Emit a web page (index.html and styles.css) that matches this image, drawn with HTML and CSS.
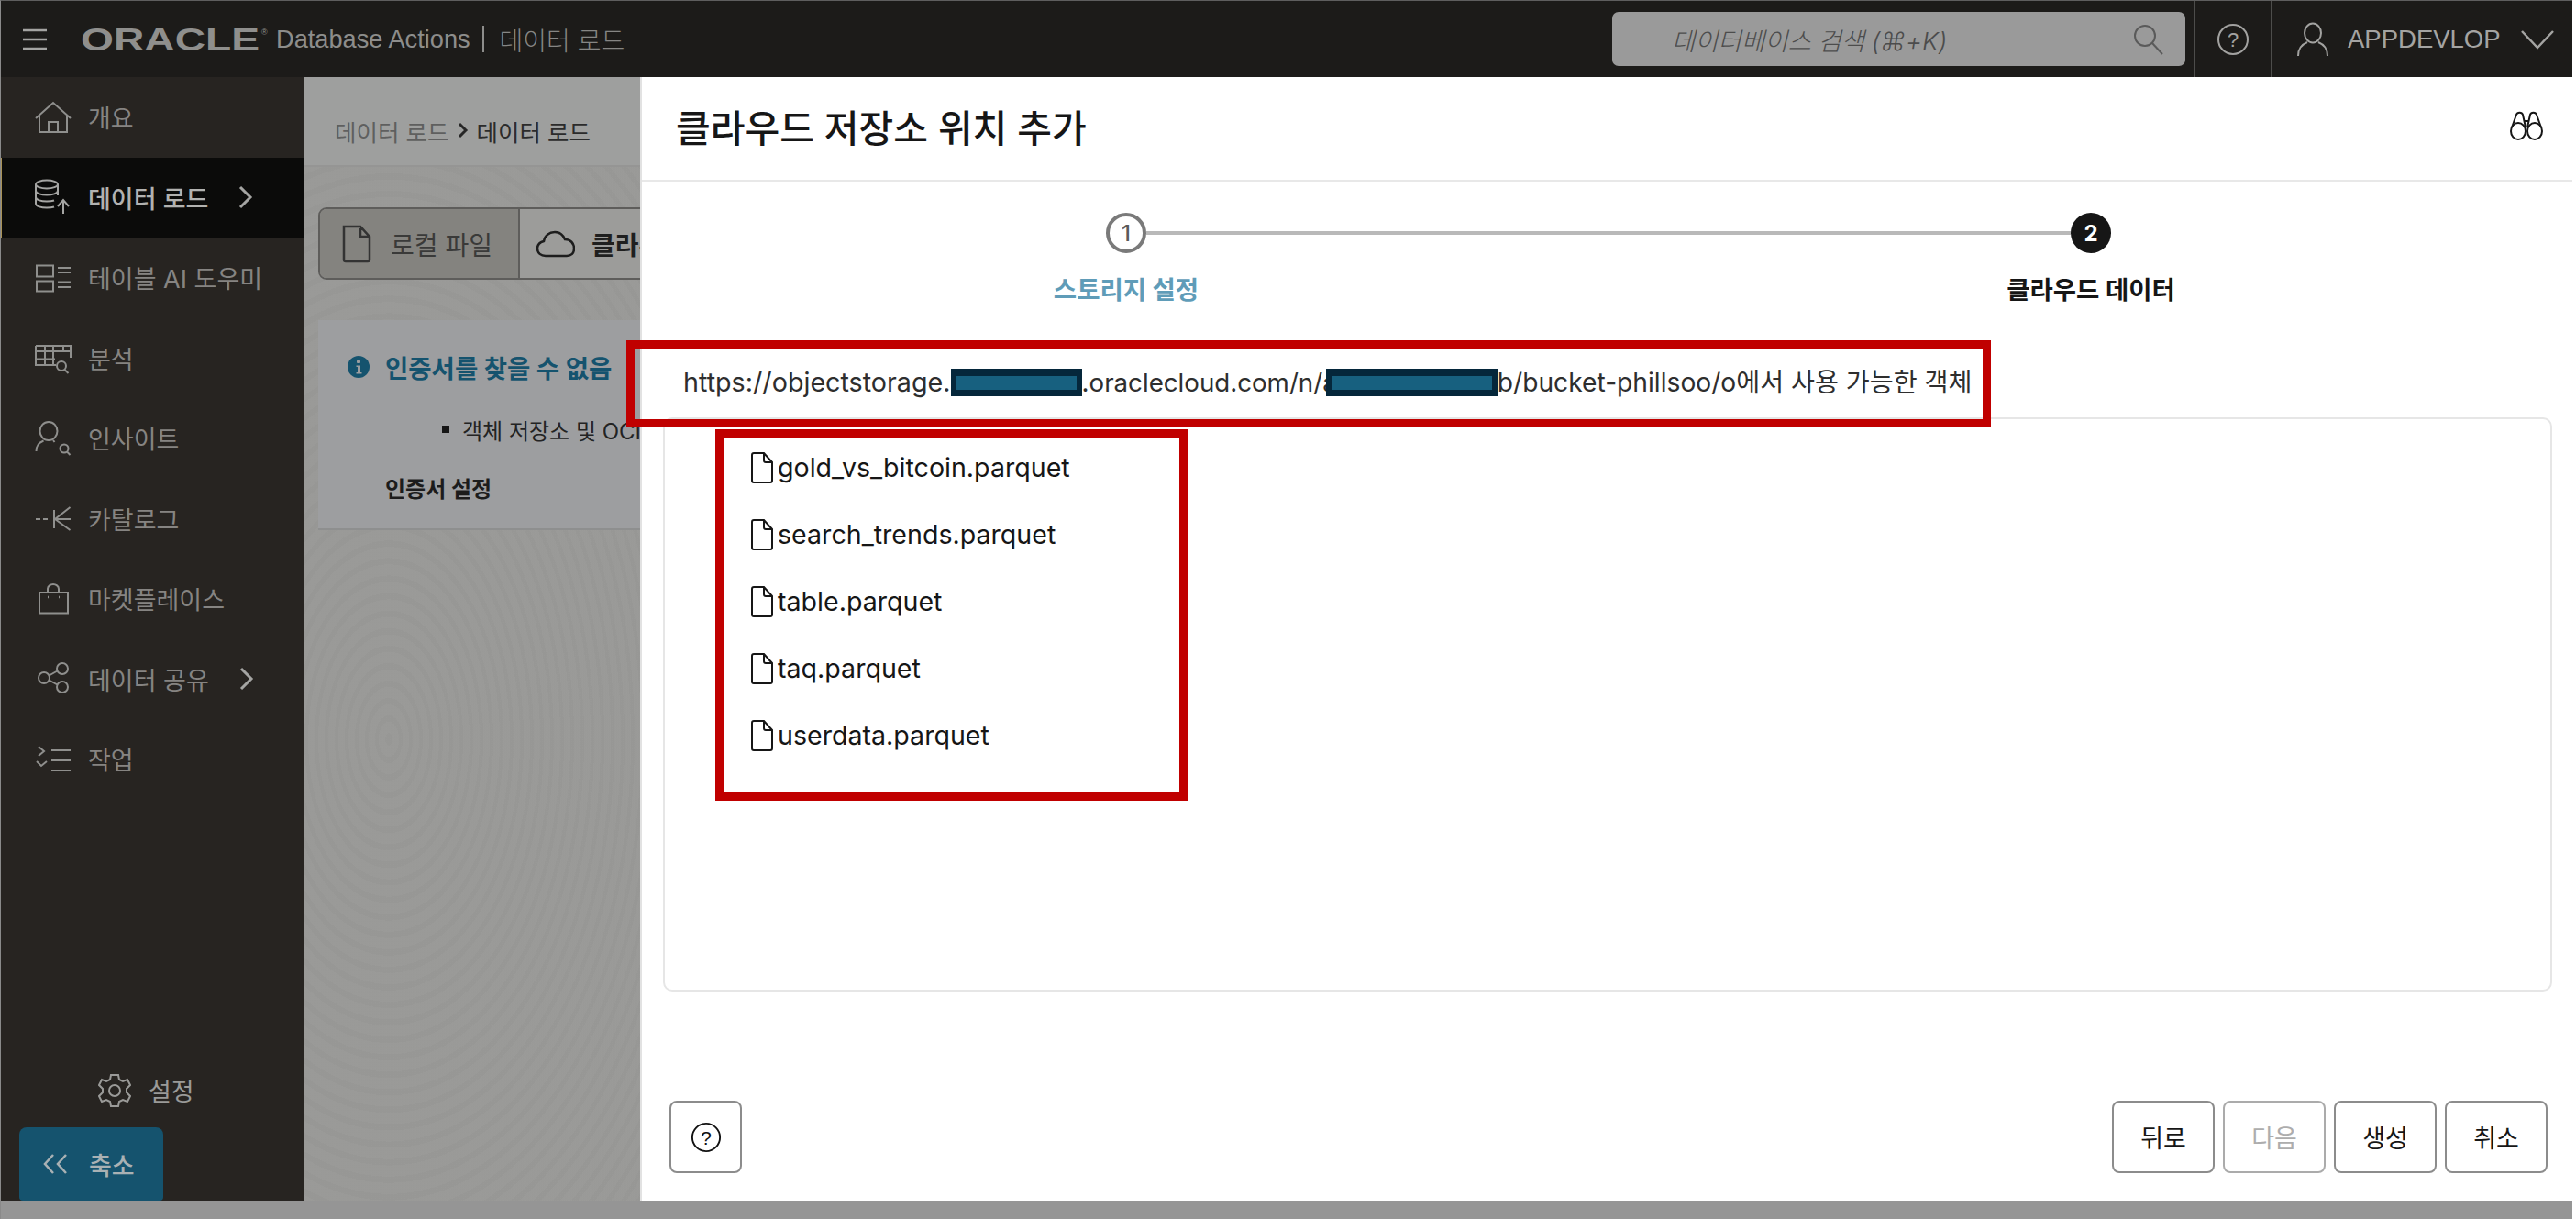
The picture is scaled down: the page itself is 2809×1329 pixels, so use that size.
FILE: index.html
```html
<!DOCTYPE html>
<html lang="ko">
<head>
<meta charset="utf-8">
<title>데이터 로드</title>
<link rel="stylesheet" href="styles.css">
</head>
<body>
<div class="app">
  <header class="topbar">
    <svg class="burger" viewBox="0 0 26 24"><path d="M0 2h26M0 12h26M0 22h26"/></svg>
    <svg class="oracle" viewBox="0 0 206 30"><text class="oracle-word" x="0" y="27" textLength="195" lengthAdjust="spacingAndGlyphs">ORACLE</text><text class="oracle-reg" x="197" y="10">®</text></svg>
    <span class="product">Database Actions</span>
    <span class="pipe"></span>
    <span class="page-name">데이터 로드</span>
    <div class="search">
      <span class="search-text">데이터베이스 검색 (⌘+K)</span>
      <svg class="search-icon" viewBox="0 0 34 34"><circle cx="13" cy="13" r="11"/><path d="M21 21l11 12"/></svg>
    </div>
    <div class="top-cell help-cell">
      <svg class="top-help" viewBox="0 0 36 36"><circle cx="18" cy="18" r="16"/><text x="18" y="26" class="qmark">?</text></svg>
    </div>
    <div class="top-cell user-cell">
      <svg class="user-icon" viewBox="0 0 34 38"><ellipse cx="17" cy="12" rx="9" ry="10.5"/><path d="M1 37c0-8 3-12 10-15M33 37c0-8-3-12-10-15"/></svg>
      <span class="user-name">APPDEVLOP</span>
      <svg class="user-chev" viewBox="0 0 38 22"><path d="M2 2l17 18L36 2"/></svg>
    </div>
  </header>

  <div class="main">
    <nav class="sidebar">
      <a class="nav-item">
        <svg class="nav-icon" viewBox="0 0 40 40"><path d="M1 21L20 4l19 17M5 18v18h30V18M15 36V25h10v11"/></svg>
        <span>개요</span>
      </a>
      <a class="nav-item active">
        <svg class="nav-icon" viewBox="0 0 40 40"><ellipse cx="13" cy="6" rx="12" ry="4.5"/><path d="M1 6v21c0 3 6 4.500 12 4.500 3 0 6-.3 8-1M25 6v12M1 13c0 3 6 4.500 12 4.500s12-1.500 12-4.500M1 20c0 3 6 4.500 12 4.500 3 0 6-.3 8-1M31 38V23M25 30l6-7 6 7"/></svg>
        <span>데이터 로드</span>
        <svg class="nav-chev" viewBox="0 0 16 26"><path d="M2 2l11 11L2 24"/></svg>
      </a>
      <a class="nav-item">
        <svg class="nav-icon" viewBox="0 0 40 40"><path d="M2 6.500h18v12H2zM2 23.500h18v11H2zM25 9h14M25 14h14M25 24.500h14M25 30h14"/></svg>
        <span>테이블 AI 도우미</span>
      </a>
      <a class="nav-item">
        <svg class="nav-icon" viewBox="0 0 40 40"><path d="M1 7h38v13M1 7v21h22M1 13h38M1 21.500h21M11 7v21M20 7v21M31 7v5"/><circle cx="29" cy="29" r="5"/><path d="M32.500 33l4 4"/></svg>
        <span>분석</span>
      </a>
      <a class="nav-item">
        <svg class="nav-icon" viewBox="0 0 40 40"><ellipse cx="15" cy="12" rx="9.500" ry="10"/><path d="M1.500 34c0-6 2-9 8-11.500M20 22l1.500 2"/><circle cx="32" cy="31" r="4.500"/><path d="M35 34.500l3.500 3.500"/></svg>
        <span>인사이트</span>
      </a>
      <a class="nav-item">
        <svg class="nav-icon" viewBox="0 0 40 40"><path d="M1 21h5M9 21h5M21 11v20M38.500 8L22 21l16.500 12M22 21h17"/></svg>
        <span>카탈로그</span>
      </a>
      <a class="nav-item">
        <svg class="nav-icon" viewBox="0 0 40 40"><path d="M5 13h31v22.500H5zM14 13V9c0-3 3-5 6-5s6 2 6 5v4"/><path class="dot" d="M14 18h1M26 18h1"/></svg>
        <span>마켓플레이스</span>
      </a>
      <a class="nav-item">
        <svg class="nav-icon" viewBox="0 0 40 40"><circle cx="10" cy="19" r="6"/><circle cx="30" cy="9" r="6"/><circle cx="30" cy="29" r="6"/><path d="M15.500 16.500l9-5M15.500 21.500l9 5"/></svg>
        <span>데이터 공유</span>
        <svg class="nav-chev" viewBox="0 0 16 26"><path d="M2 2l11 11L2 24"/></svg>
      </a>
      <a class="nav-item">
        <svg class="nav-icon" viewBox="0 0 40 40"><path d="M4 6l6 5-6 5M2 22l5 5 6-5M18 10h21M18 21h21M18 32h21"/></svg>
        <span>작업</span>
      </a>
      <div class="settings">
        <svg class="gear" viewBox="0 0 36 38"><path d="M14 2h8l1 5 4 2 5-2 3 6-4 4v4l4 4-3 6-5-2-4 2-1 5h-8l-1-5-4-2-5 2-3-6 4-4v-4l-4-4 3-6 5 2 4-2z"/><circle cx="18" cy="19" r="6"/></svg>
        <span>설정</span>
      </div>
      <button class="collapse">
        <svg class="collapse-icon" viewBox="0 0 28 24"><path d="M12 2L3 12l9 10M26 2l-9 10 9 10"/></svg>
        <span>축소</span>
      </button>
    </nav>

    <section class="content">
      <div class="crumbs">
        <span class="crumb-a">데이터 로드</span>
        <svg class="crumb-sep" viewBox="0 0 12 18"><path d="M2 2l7 7-7 7"/></svg>
        <span class="crumb-b">데이터 로드</span>
      </div>
      <div class="toggle">
        <div class="toggle-btn on">
          <svg class="tg-file" viewBox="0 0 32 42"><path d="M2 2h18l10 11v25a2 2 0 0 1-2 2H4a2 2 0 0 1-2-2zM20 4v9h9"/></svg>
          <span>로컬 파일</span>
        </div>
        <div class="toggle-btn off">
          <svg class="tg-cloud" viewBox="0 0 42 30"><path d="M10 28C5 28 1 25 1 20c0-4 3-7 7-8 1-6 6-10 12-10 5 0 9 3 11 8 6 0 10 4 10 10 0 5-3 8-8 8z"/></svg>
          <span class="strong">클라우드 저장소</span>
        </div>
      </div>
      <div class="notice">
        <div class="notice-title">
          <svg class="info" viewBox="0 0 24 24"><circle cx="12" cy="12" r="12"/><rect class="info-mark" x="10" y="4.500" width="4" height="3.500" rx="1"/><path class="info-mark" d="M9.500 10.500H14V18h1.500v1.500h-6V18H11v-6H9.500z"/></svg>
          <span>인증서를 찾을 수 없음</span>
        </div>
        <div class="notice-item">객체 저장소 및 OCI 인증서를 생성하십시오</div>
        <div class="notice-link">인증서 설정</div>
      </div>

      <aside class="drawer">
        <div class="drawer-head">
          <h1>클라우드 저장소 위치 추가</h1>
          <svg class="binoc" viewBox="0 0 36 32"><ellipse cx="9" cy="22" rx="8" ry="9"/><ellipse cx="27" cy="22" rx="8" ry="9"/><path d="M2 18L7 4c1-3 6-3 7 0l3 14M34 18L29 4c-1-3-6-3-7 0l-3 14M15 11h6"/></svg>
        </div>
        <div class="track">
          <span class="step-dot one">1</span>
          <span class="track-line"></span>
          <span class="step-dot two">2</span>
        </div>
        <div class="step-labels">
          <span class="step-label done">스토리지 설정</span>
          <span class="step-label current">클라우드 데이터</span>
        </div>
        <div class="url-row"><span class="seg-a">https://objectstorage.</span><span class="redact r1"></span><span class="seg-b">.oraclecloud.com/n/a</span><span class="redact r2"></span><span class="seg-c">b/bucket-phillsoo/o에서 사용 가능한 객체</span></div>
        <div class="file-box">
          <div class="file-row"><svg class="file-icon" viewBox="0 0 26 34"><path d="M2 3a2 2 0 0 1 2-2h11l9 10v20a2 2 0 0 1-2 2H4a2 2 0 0 1-2-2zM15 2v7a2 2 0 0 0 2 2h6"/></svg><span>gold_vs_bitcoin.parquet</span></div>
          <div class="file-row"><svg class="file-icon" viewBox="0 0 26 34"><path d="M2 3a2 2 0 0 1 2-2h11l9 10v20a2 2 0 0 1-2 2H4a2 2 0 0 1-2-2zM15 2v7a2 2 0 0 0 2 2h6"/></svg><span>search_trends.parquet</span></div>
          <div class="file-row"><svg class="file-icon" viewBox="0 0 26 34"><path d="M2 3a2 2 0 0 1 2-2h11l9 10v20a2 2 0 0 1-2 2H4a2 2 0 0 1-2-2zM15 2v7a2 2 0 0 0 2 2h6"/></svg><span>table.parquet</span></div>
          <div class="file-row"><svg class="file-icon" viewBox="0 0 26 34"><path d="M2 3a2 2 0 0 1 2-2h11l9 10v20a2 2 0 0 1-2 2H4a2 2 0 0 1-2-2zM15 2v7a2 2 0 0 0 2 2h6"/></svg><span>taq.parquet</span></div>
          <div class="file-row"><svg class="file-icon" viewBox="0 0 26 34"><path d="M2 3a2 2 0 0 1 2-2h11l9 10v20a2 2 0 0 1-2 2H4a2 2 0 0 1-2-2zM15 2v7a2 2 0 0 0 2 2h6"/></svg><span>userdata.parquet</span></div>
        </div>
        <div class="drawer-foot">
          <button class="btn help-btn"><svg class="help-icon" viewBox="0 0 36 36"><circle cx="18" cy="18" r="16"/><text x="18" y="26" class="qmark dark">?</text></svg></button>
          <div class="btn-group">
            <button class="btn">뒤로</button>
            <button class="btn disabled">다음</button>
            <button class="btn">생성</button>
            <button class="btn">취소</button>
          </div>
        </div>
      </aside>
    </section>
  </div>
  <div class="statusbar"></div>
</div>
<div class="annot annot-url"></div>
<div class="annot annot-files"></div>
</body>
</html>
```

FILE: styles.css
```css
* { box-sizing: border-box; }
html, body { margin: 0; height: 100%; }
body {
  background: #fff;
  padding-right: 4px;
  font-family: "Inter", "Noto Sans CJK KR", sans-serif;
  overflow: hidden;
}
svg { display: block; fill: none; stroke: currentColor; }

.app {
  height: 1329px;
  display: flex;
  flex-direction: column;
  border-left: 1px solid #8a8a8a;
  border-top: 1px solid #5e5e5e;
}

/* top bar */
.topbar {
  height: 83px;
  flex: none;
  background: #1c1b19;
  color: #9a9a98;
  display: flex;
  align-items: center;
}
.burger { width: 26px; height: 24px; margin-left: 24px; stroke: #a4a4a2; stroke-width: 2.5; }
.oracle { width: 206px; height: 30px; margin-left: 37px; stroke: none; overflow: visible; }
.oracle-word {
  font-family: "Liberation Sans", sans-serif;
  font-weight: 700;
  font-size: 35px;
  fill: #8f8f8d;
  stroke: none;
}
.oracle-reg { font-family: "Liberation Sans", sans-serif; font-size: 9px; fill: #8f8f8d; stroke: none; }
.product {
  font-family: "Liberation Sans", sans-serif;
  font-size: 27.200px;
  color: #8d8d8b;
  margin-left: 7px;
}
.pipe { width: 2px; height: 29px; background: #8d8d8b; margin-left: 13px; }
.page-name { font-size: 28px; font-weight: 300; color: #868684; margin-left: 17px; }
.search {
  margin-left: auto;
  width: 625px;
  height: 59px;
  background: #9a9a9a;
  border-radius: 7px;
  display: flex;
  align-items: center;
  padding-left: 65px;
  padding-right: 23px;
  color: #4c4c4c;
}
.search-text { font-size: 27.500px; font-style: italic; font-weight: 300; }
.search-icon { width: 34px; height: 34px; margin-left: auto; stroke-width: 2; stroke: #5a5a5a; }
.top-cell { height: 83px; display: flex; align-items: center; border-left: 2px solid #4d4d4b; }
.help-cell { width: 84px; justify-content: center; margin-left: 9px; }
.top-help { width: 36px; height: 36px; stroke: #a2a2a0; stroke-width: 2; }
.qmark { font-family: "Liberation Sans", sans-serif; font-size: 22px; text-anchor: middle; fill: #a2a2a0; stroke: none; }
.qmark.dark { fill: #111; }
.user-cell { flex: none; width: 329px; padding-left: 27px; }
.user-icon { width: 34px; height: 38px; stroke: #a2a2a0; stroke-width: 2; }
.user-name { font-family: "Liberation Sans", sans-serif; font-size: 27.500px; color: #a4a4a2; margin-left: 21px; }
.user-chev { width: 38px; height: 22px; margin-left: 21px; stroke: #a4a4a2; stroke-width: 2.5; }

/* main */
.main { flex: 1; display: flex; min-height: 0; }
.sidebar {
  width: 331px;
  flex: none;
  background: #272421;
  color: #868482;
  display: flex;
  flex-direction: column;
}
.nav-item {
  height: 87.5px;
  flex: none;
  display: flex;
  align-items: center;
  padding-left: 37px;
  font-size: 27px;
  font-weight: 400;
}
.nav-item span { margin-left: 18px; }
.nav-icon { width: 40px; height: 40px; flex: none; stroke: #8f8f8d; stroke-width: 2; overflow: visible; }
.nav-icon .dot { stroke-width: 2.500; }
.nav-item.active {
  background: #0b0b0a;
  color: #b2b2b0;
  font-weight: 500;
  box-shadow: inset 1px 0 0 #a99256;
}
.nav-item.active .nav-icon { stroke: #a5a5a3; }
.nav-chev { width: 16px; height: 26px; margin-left: 33px; stroke-width: 3; stroke: #a5a5a3; }
.settings {
  margin-top: auto;
  display: flex;
  align-items: center;
  padding-left: 106px;
  font-size: 27px;
  color: #9a9a98;
  margin-bottom: 21px;
}
.settings span { margin-left: 19px; }
.gear { width: 36px; height: 38px; stroke: #9a9a98; stroke-width: 2; }
.collapse {
  width: 157px;
  height: 80px;
  margin-left: 20px;
  flex: none;
  background: #15536e;
  border: 0;
  border-radius: 8px 8px 4px 4px;
  color: #a9b1b4;
  font: inherit;
  font-size: 27px;
  font-weight: 500;
  display: flex;
  align-items: center;
  padding-left: 25px;
}
.collapse-icon { width: 28px; height: 24px; stroke-width: 2.500; }
.collapse span { margin-left: 23px; }

/* content behind the drawer */
.content {
  flex: 1;
  position: relative;
  overflow: hidden;
  background:
    repeating-radial-gradient(ellipse 150px 260px at 92px 722px, rgba(0,0,0,.01) 0 4px, rgba(255,255,255,.008) 4px 11px),
    linear-gradient(90deg, #999997 0, #9a9a98 70%, #939391 100%);
}
.crumbs {
  height: 98px;
  background: #9e9f9e;
  border-bottom: 2px solid #959594;
  display: flex;
  align-items: center;
  padding: 20px 0 0 33px;
  font-size: 25.500px;
}
.crumb-a { color: #5f5f5f; }
.crumb-sep { width: 12px; height: 18px; margin: 0 8px 0 10px; stroke: #262626; stroke-width: 3; }
.crumb-b { color: #2b2b2b; }
.toggle {
  display: flex;
  margin: 44px 0 0 15px;
  width: 1000px;
  height: 79px;
  border: 2px solid #5e5d5b;
  border-radius: 9px;
  font-size: 28px;
  overflow: hidden;
}
.toggle-btn { display: flex; align-items: center; height: 100%; }
.toggle-btn.on {
  width: 218px;
  flex: none;
  background: #84837f;
  border-right: 2px solid #5e5d5b;
  color: #3a3a39;
  padding-left: 24px;
}
.toggle-btn.off { flex: 1; background: #9c9c9a; padding-left: 18px; color: #1f1f1f; }
.tg-file { width: 32px; height: 42px; flex: none; stroke: #333; stroke-width: 2.500; margin-right: 21px; }
.tg-cloud { width: 42px; height: 30px; flex: none; stroke: #1d1d1d; stroke-width: 2.500; margin-right: 18px; }
.strong { font-weight: 700; }
.notice {
  margin: 44px 0 0 15px;
  width: 900px;
  height: 229px;
  background: #9d9ea0;
  border-bottom: 2px solid #8e8f8f;
  padding: 33px 0 0 32px;
}
.notice-title {
  display: flex;
  align-items: center;
  font-size: 27.500px;
  font-weight: 700;
  color: #15536e;
  height: 36px;
}
.notice-title span { margin-left: 17px; }
.info { width: 24px; height: 24px; flex: none; fill: #15536e; stroke: none; }
.info-mark { fill: #9d9ea0; }
.notice-item {
  display: flex;
  align-items: center;
  margin: 32px 0 0 103px;
  height: 36px;
  font-size: 24px;
  color: #232323;
  white-space: nowrap;
}
.notice-item::before {
  content: "";
  width: 8px;
  height: 8px;
  flex: none;
  margin-right: 14px;
  background: #161616;
}
.notice-link { margin: 28px 0 0 41px; font-size: 24px; font-weight: 700; color: #1c1c1c; }

/* drawer */
.drawer {
  position: absolute;
  top: 0;
  bottom: 0;
  left: 366px;
  right: 0;
  background: #fff;
  border-left: 2px solid #e2e2e2;
  display: flex;
  flex-direction: column;
}
.drawer-head {
  height: 114px;
  flex: none;
  border-bottom: 2px solid #e8e8e8;
  display: flex;
  align-items: center;
  padding: 0 32px 7px 37px;
}
.drawer-head h1 { margin: 0; font-size: 41px; font-weight: 500; color: #161616; }
.binoc { width: 36px; height: 32px; margin-left: auto; stroke: #161616; stroke-width: 2; }
.track {
  display: flex;
  align-items: center;
  margin-top: 34px;
  padding: 0 503px 0 506px;
}
.step-dot {
  width: 44px;
  height: 44px;
  border-radius: 50%;
  flex: none;
  display: flex;
  align-items: center;
  justify-content: center;
  font-size: 24px;
  font-weight: 500;
}
.step-dot.one { border: 4px solid #7a7a7a; color: #5a5a5a; }
.step-dot.two { background: #161616; color: #fff; font-weight: 700; }
.track-line { flex: 1; height: 4px; background: #b9b9b9; }
.step-labels {
  display: flex;
  justify-content: space-between;
  margin-top: 21px;
  padding: 0 375px 0 378px;
}
.step-label { width: 300px; text-align: center; font-size: 27.500px; font-weight: 700; line-height: 38px; }
.step-label.done { color: #5f9cb8; }
.step-label.current { color: #161616; }
.url-row {
  margin-top: 62px;
  padding-left: 45px;
  line-height: 40px;
  height: 40px;
  color: #2e2e2e;
  white-space: nowrap;
  display: flex;
  align-items: center;
}
.seg-a { font-size: 28.700px; }
.seg-b { font-size: 27.700px; }
.seg-c { font-size: 28.200px; }
.redact {
  display: block;
  height: 30px;
  flex: none;
  background: #17607f;
  border: solid #05273b;
  border-width: 8px 6px 7px;
}
.r1 { width: 143px; }
.r2 { width: 187px; margin-left: -12px; }
.file-box {
  margin: 18px 0 0 23px;
  width: 2060px;
  height: 626px;
  flex: none;
  border: 2px solid #e6e6e6;
  border-radius: 10px;
  padding: 16px 0 0 93px;
}
.file-row { height: 73px; display: flex; align-items: center; font-size: 28.600px; color: #161616; }
.file-row span { margin-left: 4px; }
.file-icon { width: 26px; height: 34px; flex: none; stroke: #161616; stroke-width: 2; }
.drawer-foot {
  margin-top: auto;
  padding: 0 27px 30px 30px;
  display: flex;
  justify-content: space-between;
}
.btn-group { display: flex; gap: 9px; }
.btn {
  width: 112px;
  height: 79px;
  background: #fff;
  border: 2px solid #8c8c8c;
  border-radius: 8px;
  font: inherit;
  font-size: 27px;
  color: #161616;
  display: flex;
  align-items: center;
  justify-content: center;
  padding: 0;
}
.btn.disabled { color: #adadad; border-color: #ababab; }
.help-btn { width: 79px; }
.help-icon { width: 34px; height: 34px; stroke: #111; stroke-width: 2; }
.statusbar { height: 20px; flex: none; background: #959595; }

/* red annotation frames drawn over the screenshot */
.annot { position: absolute; border: 9px solid #c00000; }
.annot-url { left: 683px; top: 371px; width: 1488px; height: 95px; }
.annot-files { left: 780px; top: 468px; width: 515px; height: 405px; }
```
